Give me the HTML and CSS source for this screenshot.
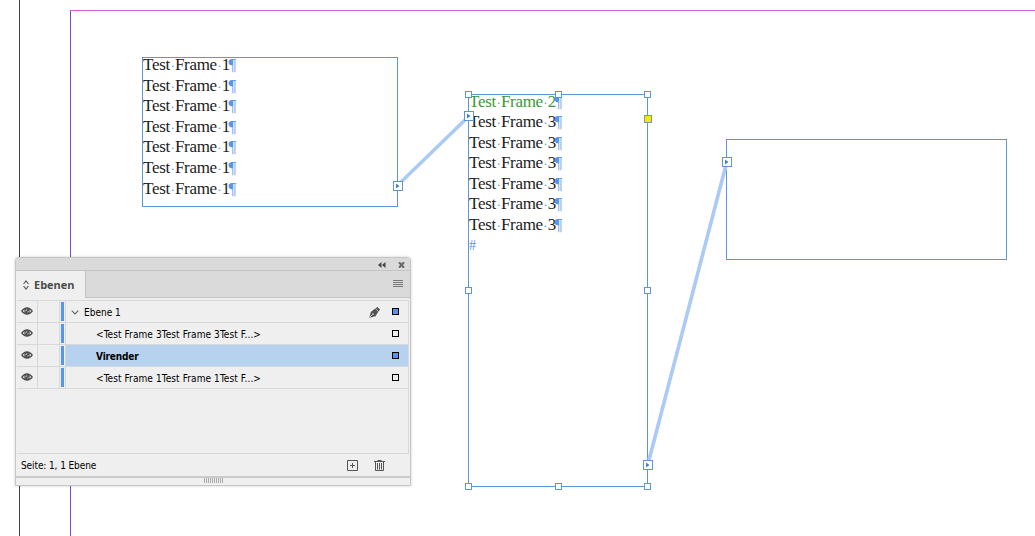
FILE: index.html
```
<!DOCTYPE html>
<html lang="de">

<head>
    <meta charset="UTF-8">
    <meta name="viewport" content="width=device-width, initial-scale=1.0">
    <title>Ebenen</title>
    <link rel="stylesheet" href="styles.css">
</head>
<body>
    <div class="pasteboard">
        <div class="page-edge"></div>
        <div class="margins"></div>

        <div class="frame frame-1">
            <p>Test<i>·</i>Frame<i>·</i>1<b>¶</b></p>
            <p>Test<i>·</i>Frame<i>·</i>1<b>¶</b></p>
            <p>Test<i>·</i>Frame<i>·</i>1<b>¶</b></p>
            <p>Test<i>·</i>Frame<i>·</i>1<b>¶</b></p>
            <p>Test<i>·</i>Frame<i>·</i>1<b>¶</b></p>
            <p>Test<i>·</i>Frame<i>·</i>1<b>¶</b></p>
            <p>Test<i>·</i>Frame<i>·</i>1<b>¶</b></p>
        </div>

        <div class="frame frame-2">
            <p class="green">Test<i>·</i>Frame<i>·</i>2<b>¶</b></p>
            <p>Test<i>·</i>Frame<i>·</i>3<b>¶</b></p>
            <p>Test<i>·</i>Frame<i>·</i>3<b>¶</b></p>
            <p>Test<i>·</i>Frame<i>·</i>3<b>¶</b></p>
            <p>Test<i>·</i>Frame<i>·</i>3<b>¶</b></p>
            <p>Test<i>·</i>Frame<i>·</i>3<b>¶</b></p>
            <p>Test<i>·</i>Frame<i>·</i>3<b>¶</b></p>
            <p class="story-end">#</p>
        </div>

        <div class="frame frame-3"></div>

        <!-- text threads, ports and handles -->
        <svg class="overlay" width="1035" height="536" viewBox="0 0 1035 536">
            <defs>
                <g id="port">
                    <rect x=".5" y=".5" width="9" height="9" fill="#fff" stroke="#5b97d8"/>
                    <path d="M3 2.5v5l3.5-2.5z" fill="#4a80c4"/>
                </g>
                <rect id="handle" x=".5" y=".5" width="6" height="6" fill="#fff" stroke="#5b97d8"/>
            </defs>
            <path class="thread" d="M399 184L467 118M649 460L726 165"/>
            <use href="#handle" x="465" y="91"/>
            <use href="#handle" x="555" y="91"/>
            <use href="#handle" x="644" y="91"/>
            <use href="#handle" x="465" y="287"/>
            <use href="#handle" x="644" y="287"/>
            <use href="#handle" x="465" y="483"/>
            <use href="#handle" x="555" y="483"/>
            <use href="#handle" x="644" y="483"/>
            <rect x="644.5" y="115.500" width="7" height="7" fill="#fbe60c" stroke="#6f9f9c"/>
            <use href="#port" x="393" y="181"/>
            <use href="#port" x="464" y="111"/>
            <use href="#port" x="722" y="157"/>
            <use href="#port" x="643" y="460"/>
        </svg>

        <div class="panel">
            <div class="titlebar">
                <svg width="8" height="6" viewBox="0 0 8 6"><path d="M3.500 0v6L0 3zM7.500 0v6L4 3z" fill="#444"/></svg>
                <svg width="7" height="6" viewBox="0 0 7 6"><path d="M1 .3l5 5.400M6 .3L1 5.700" stroke="#666" stroke-width="2"/></svg>
            </div>
            <div class="tabs">
                <div class="tab">
                    <svg width="6" height="10" viewBox="0 0 6 10"><path d="M.6 4L3 1l2.400 3M.6 6L3 9l2.400-3" fill="none" stroke="#555" stroke-width="1.100"/></svg>
                    <span>Ebenen</span>
                </div>
                <svg class="menu" width="10" height="8" viewBox="0 0 10 8"><path d="M0 .5h10M0 2.500h10M0 4.500h10M0 6.500h10" stroke="#777"/></svg>
            </div>

            <div class="layers">
                <div class="row">
                    <div class="eye"><svg width="12" height="8" viewBox="0 0 12 8"><use href="#eye"/></svg></div>
                    <div class="lock"></div>
                    <div class="color"></div>
                    <div class="name top">
                        <svg width="8" height="5" viewBox="0 0 8 5"><path d="M.7.7L4 4 7.300.7" fill="none" stroke="#666" stroke-width="1.100"/></svg>
                        <span class="t-layer">Ebene 1</span>
                        <svg class="pen" width="11" height="11" viewBox="0 0 11 11">
                            <path d="M.3 10.700L1.800 5 6.200 1.600 9.300 4.800 6.500 9.200z" fill="#505050"/>
                            <path d="M6.600 1.300L8.400 0 11 2.600 9.700 4.400z" fill="#505050"/>
                            <path d="M.9 10.100l2.600-2.700" stroke="#efefef" stroke-width=".8"/>
                            <circle cx="4" cy="7" r=".8" fill="#efefef"/>
                        </svg>
                    </div>
                    <div class="box filled"></div>
                </div>
                <div class="row">
                    <div class="eye"><svg width="12" height="8" viewBox="0 0 12 8"><use href="#eye"/></svg></div>
                    <div class="lock"></div>
                    <div class="color"></div>
                    <div class="name"><span class="t-item">&lt;Test Frame 3Test Frame 3Test F...&gt;</span></div>
                    <div class="box"></div>
                </div>
                <div class="row selected">
                    <div class="eye"><svg width="12" height="8" viewBox="0 0 12 8"><use href="#eye"/></svg></div>
                    <div class="lock"></div>
                    <div class="color"></div>
                    <div class="name"><span class="t-bold">Virender</span></div>
                    <div class="box filled"></div>
                </div>
                <div class="row">
                    <div class="eye"><svg width="12" height="8" viewBox="0 0 12 8"><use href="#eye"/></svg></div>
                    <div class="lock"></div>
                    <div class="color"></div>
                    <div class="name"><span class="t-item">&lt;Test Frame 1Test Frame 1Test F...&gt;</span></div>
                    <div class="box"></div>
                </div>
            </div>

            <div class="status">
                <span class="t-status">Seite: 1, 1 Ebene</span>
                <svg width="11" height="11" viewBox="0 0 11 11"><path d="M.5.5h10v10H.5zM5.500 3v5M3 5.500h5" fill="none" stroke="#555"/></svg>
                <svg width="11" height="11" viewBox="0 0 11 11"><path d="M0 1.500h11M3.500.5h4M1.500 2v8.500h8V2M3.500 3v6.500M5.500 3v6.500M7.500 3v6.500" fill="none" stroke="#555"/></svg>
            </div>
            <div class="grip"><span></span></div>
        </div>
    </div>

    <svg width="0" height="0" class="symbols">
        <symbol id="eye" viewBox="0 0 12 8">
            <path d="M0 4Q2.500.2 6 .2T12 4Q9.500 7.800 6 7.800T0 4z" fill="#505050"/>
            <path d="M1.800 4Q2.500 3 3.600 2.400Q3 4 3.600 5.600Q2.500 5 1.800 4zM10.200 4Q9.500 3 8.400 2.400Q9 4 8.400 5.600Q9.500 5 10.200 4z" fill="#efefef"/>
            <path d="M4.700 4.200Q4.800 2.700 6.200 2.600M6.500 5.200Q7.300 5 7.300 4.200" fill="none" stroke="#efefef" stroke-width=".8"/>
        </symbol>
    </svg>
</body>
</html>
```
FILE: styles.css
```
body {
    margin: 0;
    background-color: #fff;
    font-family: "DejaVu Sans Condensed", "DejaVu Sans", sans-serif;
    overflow: hidden;
}

.pasteboard {
    position: relative;
    width: 1035px;
    height: 536px;
    overflow: hidden;
}

.page-edge {
    position: absolute;
    left: 19px;
    top: 0;
    width: 1px;
    height: 536px;
    background-color: #444;
}

.margins {
    position: absolute;
    left: 70px;
    top: 10px;
    width: 970px;
    height: 530px;
    border-left: 1px solid #8a43bd;
    border-top: 1px solid #d760d2;
}

/* text frames */
.frame {
    position: absolute;
    box-sizing: border-box;
    border: 1px solid #5b97d8;
    font-family: "Liberation Serif", serif;
    font-size: 17px;
    color: #1c1c1c;
}

.frame-1 {
    left: 142px;
    top: 57px;
    width: 256px;
    height: 150px;
}

.frame-2 {
    left: 468px;
    top: 94px;
    width: 180px;
    height: 393px;
}

.frame-3 {
    left: 726px;
    top: 139px;
    width: 281px;
    height: 121px;
}

.frame p {
    margin: 0;
    height: 20.6px;
    line-height: 14px;
    letter-spacing: -0.3px;
    white-space: nowrap;
}

.frame .green {
    height: 20px;
}

.frame i,
.frame b {
    display: inline-block;
    font-style: normal;
    font-weight: normal;
    color: #5a94e6;
}

.frame i {
    width: 5px;
    font-size: 13px;
    text-align: center;
}

.frame b {
    margin-left: -1.5px;
}

.frame .green {
    color: #3a9a35;
}

.frame .green b,
.frame .green i {
    color: #5a94e6;
}

.frame .story-end {
    font-size: 14px;
    color: #5a94e6;
}

.overlay {
    position: absolute;
    left: 0;
    top: 0;
}

.thread {
    stroke: #abcaf7;
    stroke-width: 3.6;
}

/* layers panel */
.panel {
    position: absolute;
    left: 15px;
    top: 257px;
    box-sizing: border-box;
    width: 396px;
    height: 229px;
    display: flex;
    flex-direction: column;
    border: 1px solid #c6c6c6;
    border-radius: 4px 4px 0 0;
    background-color: #efefef;
    box-shadow: 0 0 3px rgba(0, 0, 0, 0.2);
    color: #000;
}

.titlebar {
    height: 11px;
    display: flex;
    align-items: center;
    justify-content: flex-end;
    gap: 12px;
    padding: 1px 5px 0 0;
    border-bottom: 1px solid #c4c4c4;
    border-radius: 3px 3px 0 0;
    background-color: #dadada;
}

.tabs {
    height: 26px;
    display: flex;
    align-items: center;
    justify-content: space-between;
    padding-right: 7px;
    border-bottom: 1px solid #c4c4c4;
    background-color: #dadada;
}

.tab {
    height: 27px;
    display: flex;
    align-items: center;
    align-self: flex-start;
    gap: 5px;
    box-sizing: border-box;
    width: 70px;
    padding-left: 7px;
    border-right: 1px solid #c4c4c4;
    background-color: #efefef;
    font-family: "Open Sans", sans-serif;
    font-size: 11px;
    font-weight: 700;
    color: #4c4c4c;
}

.layers {
    height: 152px;
    margin: 2px 1px 0 1px;
    border-top: 1px solid #d8d8d8;
    border-right: 1px solid #d8d8d8;
    border-bottom: 1px solid #d8d8d8;
}

.row {
    height: 21px;
    display: flex;
    border-bottom: 1px solid #d8d8d8;
}

.eye {
    width: 19px;
    display: flex;
    justify-content: center;
    padding: 6px 1px 0 0;
    border-right: 1px solid #d8d8d8;
}

.eye svg {
    display: block;
}

.lock {
    width: 21px;
    border-right: 1px solid #d8d8d8;
}

.color {
    width: 3px;
    margin: 1px;
    background-color: #5595ec;
}

.name {
    flex: 1;
    display: flex;
    align-items: center;
    padding: 2px 0 0 30px;
    border-left: 1px solid #d8d8d8;
    font-size: 10px;
    white-space: nowrap;
}

.name.top {
    padding-left: 5px;
    gap: 5px;
}

.pen {
    margin-left: auto;
    margin-right: 12px;
}

.box {
    box-sizing: border-box;
    width: 7px;
    height: 7px;
    margin: 7px 9px 0 0;
    border: 1px solid #000;
}

.filled {
    background-color: #5595ec;
}

.selected .name {
    background-color: #b7d2ef;
}

.selected {
    background: linear-gradient(#b7d2ef, #b7d2ef) right / 20px 100% no-repeat;
}

.t-item {
    letter-spacing: 0.1px;
}

.t-bold {
    font-weight: bold;
    letter-spacing: -0.15px;
}

.t-status {
    letter-spacing: -0.1px;
}

.status {
    flex: 1;
    display: flex;
    align-items: center;
    padding: 0 25px 0 5px;
    font-size: 10px;
}

.status span {
    flex: 1;
}

.status svg + svg {
    margin-left: 16px;
}

.grip {
    height: 7px;
    display: flex;
    justify-content: center;
    align-items: flex-start;
    border-top: 2px solid #cbcbcb;
}

.grip span {
    width: 19px;
    height: 5px;
    background: repeating-linear-gradient(to right, #aaa 0, #aaa 1px, transparent 1px, transparent 2px);
}

.symbols {
    position: absolute;
}
```
